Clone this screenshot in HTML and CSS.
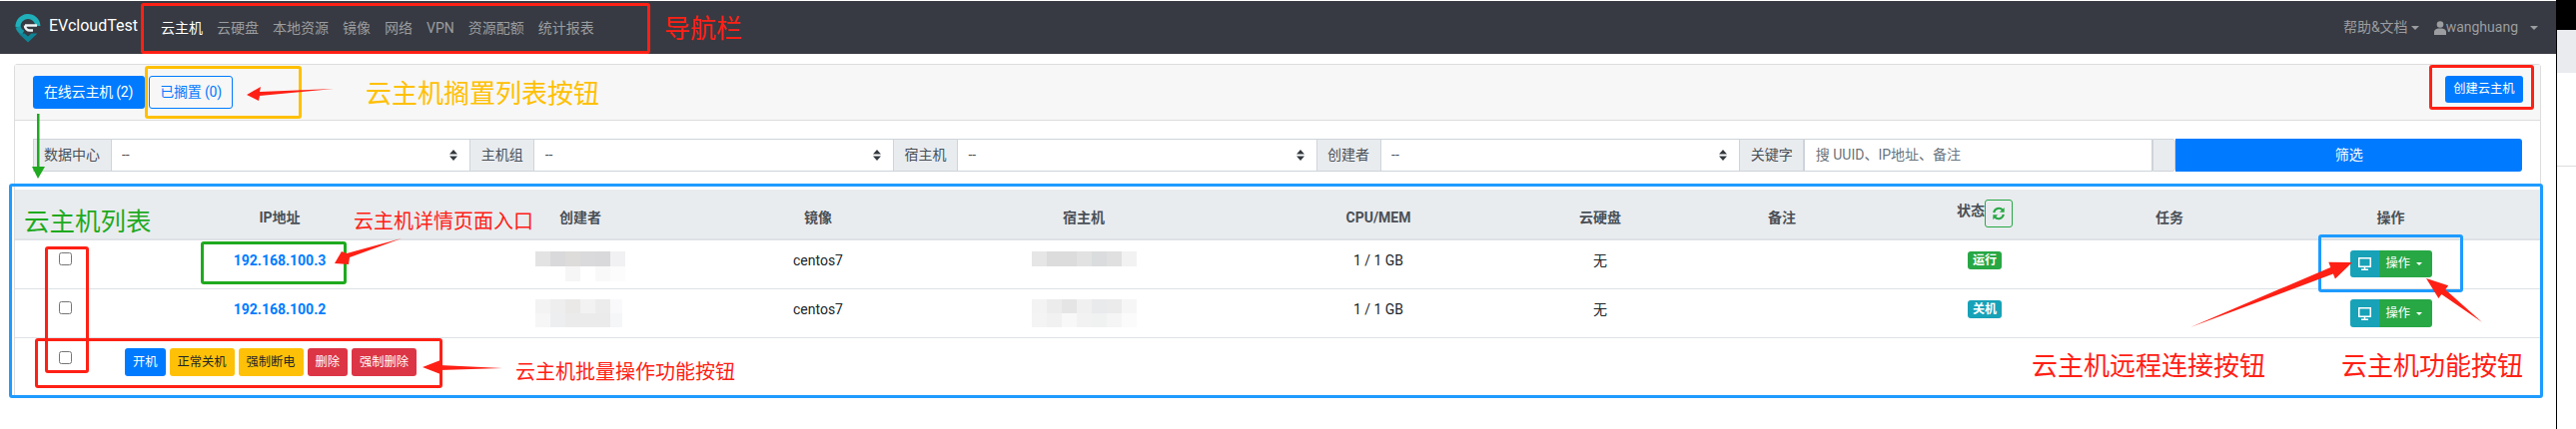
FILE: index.html
```html
<!DOCTYPE html>
<html lang="zh-CN">
<head>
<meta charset="utf-8">
<title>EVcloudTest</title>
<link rel="stylesheet" href="styles.css">
</head>
<body>
<div class="page">
  <div class="main">
    <nav class="navbar">
      <div class="brand">
        <svg class="logo" viewBox="0 0 26 30" width="26" height="30">
          <path d="M3 14A10 10 0 0 1 23 13" fill="none" stroke="#1fb0ba" stroke-width="5"/>
          <path d="M3 14A10 10 0 0 0 8 20" fill="none" stroke="#1798a6" stroke-width="5"/>
          <path d="M10 12.5H22M10 12.500A5 5 0 0 0 15 17.500H18" fill="none" stroke="#eef4f5" stroke-width="2.600"/>
          <path d="M3.500 20.500L13 29.500L22.500 20.500H16.500L13 23.500L9.500 20.500Z" fill="#0f8496"/>
        </svg>
        <span class="brand-name">EVcloudTest</span>
      </div>
      <ul class="nav-left">
        <li class="active">云主机</li>
        <li>云硬盘</li>
        <li>本地资源</li>
        <li>镜像</li>
        <li>网络</li>
        <li>VPN</li>
        <li>资源配额</li>
        <li>统计报表</li>
      </ul>
      <div class="nav-right">
        <span class="nav-drop">帮助&amp;文档<i class="caret"></i></span>
        <span class="nav-drop nav-user">
          <svg class="user-icon" viewBox="0 0 12 14" width="12" height="14"><circle cx="6" cy="3.500" r="3.300"/><path d="M0 14V11Q0 8 4 7.500H8Q12 8 12 11V14Z"/></svg>wanghuang<i class="caret caret-user"></i>
        </span>
      </div>
    </nav>

    <section class="card">
      <header class="card-head">
        <div class="tabs">
          <a class="btn btn-primary">在线云主机 (2)</a>
          <a class="btn btn-outline">已搁置 (0)</a>
        </div>
        <a class="btn btn-sm btn-primary">创建云主机</a>
      </header>
      <div class="card-body">
        <form class="filters">
          <label class="addon">数据中心</label>
          <select class="control"><option>--</option></select>
          <label class="addon">主机组</label>
          <select class="control"><option>--</option></select>
          <label class="addon">宿主机</label>
          <select class="control"><option>--</option></select>
          <label class="addon">创建者</label>
          <select class="control"><option>--</option></select>
          <label class="addon">关键字</label>
          <input class="control control-text" placeholder="搜 UUID、IP地址、备注">
          <span class="addon addon-stub"></span>
          <button type="button" class="btn btn-primary btn-filter">筛选</button>
        </form>

        <table class="vm-table">
          <colgroup>
            <col class="c1"><col class="c2"><col class="c3"><col class="c4"><col class="c5"><col class="c6"><col class="c7"><col class="c8"><col class="c9"><col class="c10"><col class="c11">
          </colgroup>
          <thead>
            <tr>
              <th></th><th>IP地址</th><th>创建者</th><th>镜像</th><th>宿主机</th><th>CPU/MEM</th><th>云硬盘</th><th>备注</th>
              <th class="th-status">
                <div class="status-head">
                  <span>状态</span>
                  <span class="refresh">
                    <svg viewBox="0 0 16 16" width="14" height="14" fill="none" stroke="#28a745" stroke-width="2.400"><path d="M2.500 7A5.800 5.800 0 0 1 12.500 4"/><path d="M13.500 9A5.800 5.800 0 0 1 3.500 12"/><path d="M14.500 1V6.500H9" fill="#28a745" stroke="none"/><path d="M1.500 15V9.500H7" fill="#28a745" stroke="none"/></svg>
                  </span>
                </div>
              </th>
              <th>任务</th><th>操作</th>
            </tr>
          </thead>
          <tbody>
            <tr>
              <td><input type="checkbox" class="check"></td>
              <td><a class="ip">192.168.100.3</a></td>
              <td class="blur-cell">
                <svg class="blur blur-first" width="90" height="30" shape-rendering="crispEdges">
                  <rect x="0" width="15" height="15" fill="#e3e3e3"/><rect x="15" width="15" height="15" fill="#d9d9db"/><rect x="30" width="15" height="15" fill="#dedcda"/><rect x="45" width="15" height="15" fill="#dadadc"/><rect x="60" width="15" height="15" fill="#d9d9db"/><rect x="75" width="15" height="15" fill="#f1f1f3"/>
                  <rect x="30" y="15" width="15" height="15" fill="#f6f6f6"/><rect x="60" y="15" width="15" height="15" fill="#f9f9f9"/><rect x="75" y="15" width="15" height="15" fill="#fbfcfb"/>
                </svg>
              </td>
              <td>centos7</td>
              <td class="blur-cell">
                <svg class="blur blur-first" width="105" height="15" shape-rendering="crispEdges">
                  <rect x="0" width="15" height="15" fill="#e6e6e6"/><rect x="15" width="15" height="15" fill="#dcdcdc"/><rect x="30" width="15" height="15" fill="#dcdcdc"/><rect x="45" width="15" height="15" fill="#e2e2e2"/><rect x="60" width="15" height="15" fill="#dadcdd"/><rect x="75" width="15" height="15" fill="#e0e0e0"/><rect x="90" width="15" height="15" fill="#f2f2f2"/>
                </svg>
              </td>
              <td>1 / 1 GB</td>
              <td>无</td>
              <td></td>
              <td><span class="badge badge-green">运行</span></td>
              <td></td>
              <td>
                <div class="op-group">
                  <a class="op-vnc"><svg viewBox="0 0 13 13" width="13" height="13" fill="none" stroke="#fff"><rect x="0.750" y="0.750" width="11.500" height="8.500" stroke-width="1.500"/><path d="M6.500 10V12M3 12.300H10" stroke-width="1.400"/></svg></a>
                  <a class="op-menu">操作<i class="caret caret-op"></i></a>
                </div>
              </td>
            </tr>
            <tr>
              <td><input type="checkbox" class="check"></td>
              <td><a class="ip">192.168.100.2</a></td>
              <td class="blur-cell">
                <svg class="blur" width="90" height="28" shape-rendering="crispEdges">
                  <rect x="0" width="15" height="14" fill="#f3f3f3"/><rect x="15" width="15" height="14" fill="#eeeeee"/><rect x="30" width="15" height="14" fill="#ebe9e7"/><rect x="45" width="15" height="14" fill="#f2f2f2"/><rect x="60" width="15" height="14" fill="#ececec"/><rect x="75" width="12" height="14" fill="#f9f9fb"/>
                  <rect x="0" y="14" width="15" height="14" fill="#f6f6f6"/><rect x="15" y="14" width="15" height="14" fill="#eceef0"/><rect x="30" y="14" width="15" height="14" fill="#ebebeb"/><rect x="45" y="14" width="15" height="14" fill="#ebebeb"/><rect x="60" y="14" width="15" height="14" fill="#ebebeb"/><rect x="75" y="14" width="12" height="14" fill="#f5f6f8"/>
                </svg>
              </td>
              <td>centos7</td>
              <td class="blur-cell">
                <svg class="blur" width="105" height="28" shape-rendering="crispEdges">
                  <rect x="0" width="15" height="14" fill="#f3f3f3"/><rect x="15" width="15" height="14" fill="#ececec"/><rect x="30" width="15" height="14" fill="#e5e5e5"/><rect x="45" width="15" height="14" fill="#f0f0f0"/><rect x="60" width="15" height="14" fill="#e9eaec"/><rect x="75" width="15" height="14" fill="#ebebeb"/><rect x="90" width="15" height="14" fill="#f6f6f6"/>
                  <rect x="0" y="14" width="15" height="14" fill="#f4f4f4"/><rect x="15" y="14" width="15" height="14" fill="#f1f1f1"/><rect x="30" y="14" width="15" height="14" fill="#f8f8f8"/><rect x="45" y="14" width="15" height="14" fill="#f2f2f2"/><rect x="60" y="14" width="15" height="14" fill="#f0f1f1"/><rect x="75" y="14" width="15" height="14" fill="#f5f5f5"/><rect x="90" y="14" width="15" height="14" fill="#fbfbfb"/>
                </svg>
              </td>
              <td>1 / 1 GB</td>
              <td>无</td>
              <td></td>
              <td><span class="badge badge-teal">关机</span></td>
              <td></td>
              <td>
                <div class="op-group">
                  <a class="op-vnc"><svg viewBox="0 0 13 13" width="13" height="13" fill="none" stroke="#fff"><rect x="0.750" y="0.750" width="11.500" height="8.500" stroke-width="1.500"/><path d="M6.500 10V12M3 12.300H10" stroke-width="1.400"/></svg></a>
                  <a class="op-menu">操作<i class="caret caret-op"></i></a>
                </div>
              </td>
            </tr>
            <tr class="batch-row">
              <td><input type="checkbox" class="check"></td>
              <td colspan="10" class="batch-cell">
                <div class="batch">
                  <a class="btn btn-sm btn-primary">开机</a>
                  <a class="btn btn-sm btn-warning">正常关机</a>
                  <a class="btn btn-sm btn-warning">强制断电</a>
                  <a class="btn btn-sm btn-danger">删除</a>
                  <a class="btn btn-sm btn-danger">强制删除</a>
                </div>
              </td>
            </tr>
          </tbody>
        </table>
      </div>
    </section>
  </div>
  <div class="divider"></div>
  <aside class="sliver">
    <div class="sliver-top"></div>
    <div class="sliver-band"></div>
    <div class="sliver-rest"></div>
  </aside>

  <div class="mark mark-red mark-nav"></div>
  <div class="mark mark-yellow mark-shelved"></div>
  <div class="mark mark-red mark-create"></div>
  <div class="mark mark-blue mark-table"></div>
  <div class="mark mark-green mark-ip"></div>
  <div class="mark mark-red mark-checks"></div>
  <div class="mark mark-red mark-batch"></div>
  <div class="mark mark-blue mark-ops"></div>

  <span class="note note-red note-nav">导航栏</span>
  <span class="note note-yellow note-shelved">云主机搁置列表按钮</span>
  <span class="note note-green note-list">云主机列表</span>
  <span class="note note-red note-detail">云主机详情页面入口</span>
  <span class="note note-red note-batch">云主机批量操作功能按钮</span>
  <span class="note note-red note-remote">云主机远程连接按钮</span>
  <span class="note note-red note-func">云主机功能按钮</span>

  <svg class="arrows" width="2579" height="430">
    <polygon fill="#ff2015" points="334,89 260,92 261,87 247,95 259,101 260,96"/>
    <polygon fill="#1faa1f" points="37,114 39.500,114 39.500,167 45,167 38,179 32,167 37,167"/>
    <polygon fill="#ff2015" points="402,239 350,258 349,265 335,264 342,252 347,254"/>
    <polygon fill="#ff2015" points="503,369 440,366 441,361 423,368 441,375 440,371"/>
    <polygon fill="#ff2015" points="2193,328 2335.900,274.500 2337.900,279.600 2355,263 2331.300,262.800 2333.300,267.900"/>
    <polygon fill="#ff2015" points="2485,323 2448.200,290.200 2451.200,286.300 2429,279 2441.400,298.900 2444.400,295"/>
  </svg>
</div>
</body>
</html>
```
FILE: styles.css
```css
* { box-sizing: border-box; }
html, body { margin: 0; padding: 0; background: #fff; }
body {
  font-family: Roboto, "Noto Sans CJK SC", sans-serif;
  font-size: 14px;
  line-height: 21px;
  color: #212529;
}
.page {
  position: relative;
  display: flex;
  width: 2579px;
  height: 430px;
  overflow: hidden;
}
.main { width: 2559px; flex: none; padding-top: 1px; background: #fff; }
.divider { width: 1px; flex: none; background: #000; }
.sliver { flex: 1; display: flex; flex-direction: column; }
.sliver-top { height: 30px; background: #000; }
.sliver-band { height: 43px; background: #e9ebee; }
.sliver-rest { flex: 1; }
.sliver-rest::before { content: ""; display: block; height: 93px; border-bottom: 1px solid #ddd; }

/* navbar */
.navbar {
  display: flex;
  align-items: center;
  height: 53px;
  padding: 0 18px 0 15px;
  background: #373a42;
}
.brand { display: flex; align-items: center; width: 139px; flex: none; }
.logo { flex: none; margin-right: 8px; }
.brand-name { color: #fff; font-size: 16px; position: relative; top: -2px; }
.nav-left {
  display: flex;
  list-style: none;
  margin: 0;
  padding: 2px 0 0;
  flex: 1;
}
.nav-left li { padding: 0 7px; color: #9b9da0; white-space: nowrap; }
.nav-left li.active { color: #fff; }
.nav-right { display: flex; align-items: center; color: #9b9da0; }
.nav-drop { display: flex; align-items: center; }
.nav-user { margin-left: 15px; }
.user-icon { fill: #9b9da0; flex: none; }
.caret {
  display: inline-block;
  width: 0;
  height: 0;
  margin-left: 3px;
  border-top: 4px solid currentColor;
  border-left: 4px solid transparent;
  border-right: 4px solid transparent;
}
.caret-user { margin-left: 12px; }

/* card */
.card {
  margin: 10px 0 0 14px;
  width: 2530px;
  border: 1px solid #ddd;
  border-radius: 3px;
}
.card-head {
  display: flex;
  justify-content: space-between;
  align-items: flex-start;
  padding: 10.500px 17.500px;
  background: #f7f7f7;
  border-bottom: 1px solid #ddd;
}
.tabs { display: flex; gap: 4px; letter-spacing: -0.2px; }
.btn {
  display: inline-block;
  padding: 5.250px 10.500px;
  border: 1px solid transparent;
  border-radius: 3px;
  font-family: inherit;
  font-size: 14px;
  line-height: 21px;
  text-align: center;
  white-space: nowrap;
}
.btn-sm { padding: 3.500px 7px; font-size: 12.250px; line-height: 18.375px; }
.btn-primary { background: #007bff; color: #fff; }
.btn-outline { border-color: #007bff; color: #007bff; }
.btn-warning { background: #ffc107; color: #212529; }
.btn-danger { background: #dc3545; color: #fff; }

.card-body { padding: 18px 0 10px; }

/* filters */
.filters {
  display: flex;
  margin: 0 17.500px 17.500px;
  height: 33.500px;
}
.addon {
  flex: none;
  padding: 5.250px 10.500px;
  background: #e9ecef;
  border: 1px solid #ced4da;
  color: #495057;
  white-space: nowrap;
}
.addon-stub { width: 22px; border-radius: 0 3px 3px 0; }
.control {
  flex: 361 1 0;
  min-width: 0;
  height: 33.500px;
  padding: 0 10.500px;
  margin: 0;
  border: 1px solid #ced4da;
  border-width: 1px 0;
  border-radius: 0;
  background: #fff url("data:image/svg+xml,%3Csvg xmlns='http://www.w3.org/2000/svg' width='8' height='11'%3E%3Cpath d='M4 0L8 4.500H0ZM4 11L0 6.500H8Z' fill='%23343a40'/%3E%3C/svg%3E") no-repeat right 12px top 10px;
  font-family: inherit;
  font-size: 14px;
  color: #495057;
  appearance: none;
}
.control-text {
  flex: 348 1 0;
  background-image: none;
  border-width: 1px;
}
.control-text::placeholder { color: #6c757d; opacity: 1; }
.btn-filter { flex: 347 1 0; min-width: 0; border-radius: 0 3px 3px 0; }

/* table */
.vm-table {
  width: 100%;
  table-layout: fixed;
  border-collapse: separate;
  border-spacing: 0;
}
.c1 { width: 101px; }
.c2 { width: 328px; }
.c3 { width: 274px; }
.c4 { width: 202px; }
.c5 { width: 330px; }
.c6 { width: 260px; }
.c7 { width: 184px; }
.c8 { width: 180px; }
.c9 { width: 226px; }
.c10 { width: 144px; }
.vm-table th {
  height: 51px;
  padding: 0 0 9.500px;
  background: #e9ecef;
  border-bottom: 2px solid #dee2e6;
  color: #495057;
  font-weight: 700;
  vertical-align: bottom;
  text-align: center;
}
.vm-table .th-status { padding-bottom: 11px; }
.status-head { display: flex; justify-content: center; align-items: center; }
.status-head span:first-child { position: relative; top: -2px; }
.refresh {
  display: flex;
  align-items: center;
  justify-content: center;
  width: 28px;
  height: 28px;
  border: 1px solid #28a745;
  border-radius: 3px;
}
.vm-table td {
  padding: 10.500px 0;
  border-bottom: 1px solid #dee2e6;
  text-align: center;
  vertical-align: top;
}
.vm-table .blur-cell { padding-bottom: 0; }
.blur { display: block; margin: 0 auto; }
.blur-first { margin-top: 1px; }
.check {
  display: block;
  width: 13px;
  height: 13px;
  margin: 2px auto 0;
}
.ip { color: #007bff; font-weight: 700; }
.badge {
  display: inline-block;
  padding: 3px 4.500px;
  border-radius: 3px;
  color: #fff;
  font-size: 12px;
  font-weight: 700;
  line-height: 12px;
  vertical-align: 1px;
}
.badge-green { background: #28a745; }
.badge-teal { background: #17a2b8; }
.op-group { display: inline-flex; height: 27.375px; font-size: 12.250px; color: #fff; }
.op-vnc {
  display: flex;
  align-items: center;
  justify-content: center;
  width: 29px;
  background: #17a2b8;
  border-radius: 3px 0 0 3px;
}
.op-menu {
  display: flex;
  align-items: center;
  width: 53px;
  padding-left: 7px;
  background: #28a745;
  border-radius: 0 3px 3px 0;
}
.caret-op {
  margin-left: 6px;
  border-top-width: 3.500px;
  border-left-width: 3.500px;
  border-right-width: 3.500px;
}
.batch-row td { border-bottom: 0; }
.vm-table .batch-cell { padding: 10px 0 11px 9px; text-align: left; }
.batch { display: flex; gap: 4px; }

/* annotations drawn over the screenshot */
.mark { position: absolute; border: 3px solid; border-radius: 3px; }
.mark-red { border-color: #ff2015; }
.mark-yellow { border-color: #ffc000; }
.mark-blue { border-color: #1e9bff; }
.mark-green { border-color: #1faa1f; }
.mark-nav { left: 141px; top: 3px; width: 510px; height: 51px; }
.mark-shelved { left: 145px; top: 66px; width: 157px; height: 53px; }
.mark-create { left: 2432px; top: 65px; width: 105px; height: 45px; }
.mark-table { left: 9px; top: 184px; width: 2537px; height: 215px; }
.mark-ip { left: 201px; top: 242px; width: 146px; height: 43px; }
.mark-checks { left: 45px; top: 247px; width: 44px; height: 127px; }
.mark-batch { left: 35px; top: 339px; width: 408px; height: 50px; }
.mark-ops { left: 2321px; top: 235px; width: 145px; height: 58px; }

.note { position: absolute; white-space: nowrap; font-family: "Noto Sans CJK SC", sans-serif; }
.note-red { color: #ff2015; }
.note-yellow { color: #ffc000; }
.note-green { color: #1faa1f; }
.note-nav { left: 665px; top: 10px; font-size: 26px; line-height: 34px; }
.note-shelved { left: 366px; top: 75px; font-size: 26px; line-height: 34px; }
.note-list { left: 24px; top: 204px; font-size: 25.500px; line-height: 32px; }
.note-detail { left: 354px; top: 208px; font-size: 20px; line-height: 26px; }
.note-batch { left: 516px; top: 359px; font-size: 20px; line-height: 26px; }
.note-remote { left: 2034px; top: 348px; font-size: 26px; line-height: 34px; }
.note-func { left: 2344px; top: 348px; font-size: 26px; line-height: 34px; }

.arrows { position: absolute; left: 0; top: 0; pointer-events: none; }
```
